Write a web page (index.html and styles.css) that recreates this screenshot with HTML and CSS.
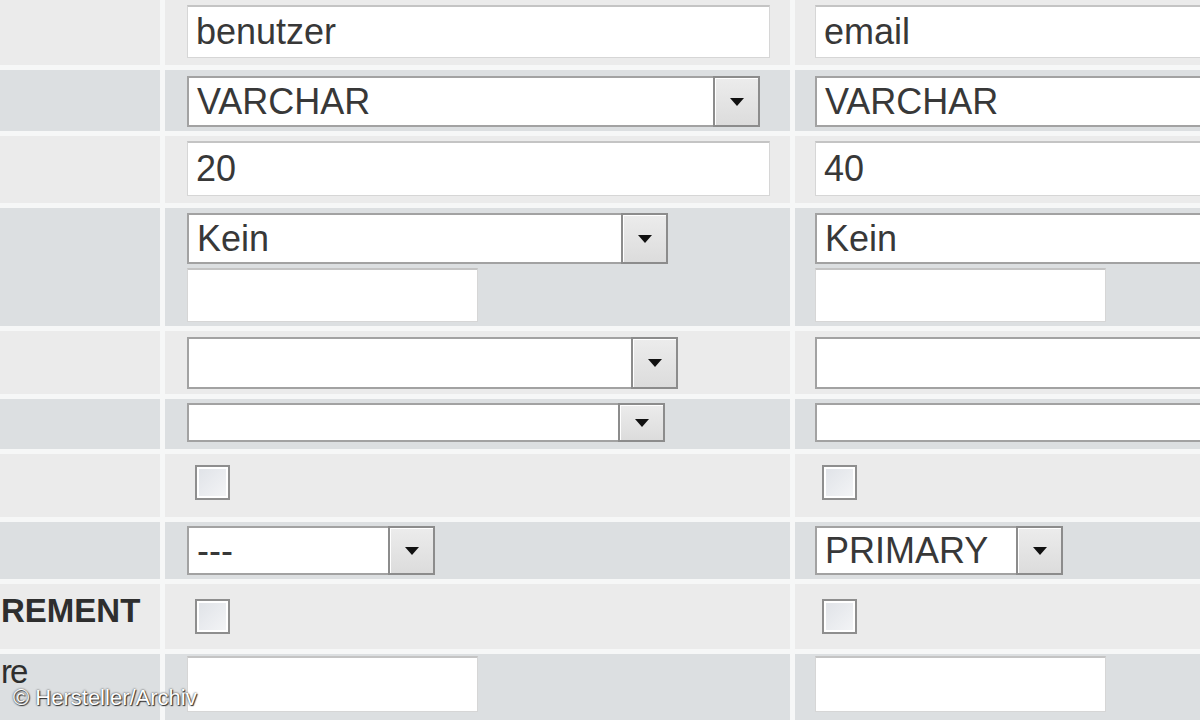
FILE: index.html
```html
<!DOCTYPE html>
<html lang="de">
<head>
  <meta charset="UTF-8">
  <title>Struktur</title>
  <link rel="stylesheet" href="styles.css">
</head>
<body>

  <div class="sheet">

    <div class="row light row-name">
      <div class="label"></div>
      <div class="cell"><input type="text" class="field w-wide h-53" value="benutzer"></div>
      <div class="cell right"><input type="text" class="field w-wide h-53" value="email"></div>
    </div>

    <div class="row dark row-type">
      <div class="label"></div>
      <div class="cell">
        <div class="select w-type h-51"><span class="value">VARCHAR</span><span class="arrow"><svg viewBox="0 0 14 8"><path d="M0 0h14L7 8z"/></svg></span></div>
      </div>
      <div class="cell right">
        <div class="select w-wide h-51"><span class="value">VARCHAR</span><span class="arrow"><svg viewBox="0 0 14 8"><path d="M0 0h14L7 8z"/></svg></span></div>
      </div>
    </div>

    <div class="row light row-length">
      <div class="label"></div>
      <div class="cell"><input type="text" class="field w-wide h-55" value="20"></div>
      <div class="cell right"><input type="text" class="field w-wide h-55" value="40"></div>
    </div>

    <div class="row dark row-default">
      <div class="label"></div>
      <div class="cell stack">
        <div class="select w-default h-51"><span class="value">Kein</span><span class="arrow"><svg viewBox="0 0 14 8"><path d="M0 0h14L7 8z"/></svg></span></div>
        <input type="text" class="field w-small h-54" value="">
      </div>
      <div class="cell right stack">
        <div class="select w-wide h-51"><span class="value">Kein</span><span class="arrow"><svg viewBox="0 0 14 8"><path d="M0 0h14L7 8z"/></svg></span></div>
        <input type="text" class="field w-small h-54" value="">
      </div>
    </div>

    <div class="row light row-collation">
      <div class="label"></div>
      <div class="cell">
        <div class="select w-collation h-52"><span class="value"></span><span class="arrow"><svg viewBox="0 0 14 8"><path d="M0 0h14L7 8z"/></svg></span></div>
      </div>
      <div class="cell right">
        <div class="select w-wide h-52"><span class="value"></span><span class="arrow"><svg viewBox="0 0 14 8"><path d="M0 0h14L7 8z"/></svg></span></div>
      </div>
    </div>

    <div class="row dark row-attr">
      <div class="label"></div>
      <div class="cell">
        <div class="select w-attr h-39"><span class="value"></span><span class="arrow"><svg viewBox="0 0 14 8"><path d="M0 0h14L7 8z"/></svg></span></div>
      </div>
      <div class="cell right">
        <div class="select w-wide h-39"><span class="value"></span><span class="arrow"><svg viewBox="0 0 14 8"><path d="M0 0h14L7 8z"/></svg></span></div>
      </div>
    </div>

    <div class="row light row-null">
      <div class="label"></div>
      <div class="cell check-cell"><span class="checkbox"></span></div>
      <div class="cell right check-cell"><span class="checkbox"></span></div>
    </div>

    <div class="row dark row-index">
      <div class="label"></div>
      <div class="cell">
        <div class="select w-index h-49"><span class="value">---</span><span class="arrow"><svg viewBox="0 0 14 8"><path d="M0 0h14L7 8z"/></svg></span></div>
      </div>
      <div class="cell right">
        <div class="select w-index h-49"><span class="value">PRIMARY</span><span class="arrow"><svg viewBox="0 0 14 8"><path d="M0 0h14L7 8z"/></svg></span></div>
      </div>
    </div>

    <div class="row light row-ai">
      <div class="label bold">REMENT</div>
      <div class="cell check-cell"><span class="checkbox"></span></div>
      <div class="cell right check-cell"><span class="checkbox"></span></div>
    </div>

    <div class="row dark row-comment">
      <div class="label top">re</div>
      <div class="cell"><input type="text" class="field w-small h-56" value=""></div>
      <div class="cell right"><input type="text" class="field w-small h-56" value=""></div>
    </div>

  </div>

  <div class="credit">© Hersteller/Archiv</div>

</body>
</html>
```

FILE: styles.css
```css
html, body {
  margin: 0;
  height: 720px;
  overflow: hidden;
}

body {
  font-family: "Liberation Sans", Arial, sans-serif;
  background-color: #f6f7f7;
  color: #383838;
  position: relative;
}

.sheet {
  display: flex;
  flex-direction: column;
  gap: 5px;
}

.row {
  display: grid;
  grid-template-columns: 160px 625px minmax(0, 1fr);
  column-gap: 5px;
}

.row > div {
  overflow: hidden;
}

.light > div {
  background-color: #ebebeb;
}

.dark > div {
  background-color: #dcdfe1;
}

.row-name { height: 65px; }
.row-type { height: 61px; }
.row-length { height: 67px; }
.row-default { height: 118px; }
.row-collation { height: 63px; }
.row-attr { height: 50px; }
.row-null { height: 63px; }
.row-index { height: 57px; }
.row-ai { height: 65px; }
.row-comment { height: 70px; }

/* labels (left column, only their ends are in the crop) */
.label {
  display: flex;
  align-items: center;
  padding-left: 1px;
  font-size: 36px;
  white-space: nowrap;
  color: #2e2e2e;
}

.label.bold {
  font-weight: bold;
  font-size: 33px;
  padding-bottom: 12px;
}

.label.top {
  align-items: flex-start;
  line-height: 36px;
  font-size: 33px;
  letter-spacing: -2px;
}

.cell {
  padding: 5px 0 0 22px;
}

.cell.right {
  padding-left: 20px;
}

.row-type .cell { padding-top: 6px; }
.row-collation .cell { padding-top: 6px; }
.row-attr .cell { padding-top: 4px; }
.row-index .cell { padding-top: 4px; }
.row-comment .cell { padding-top: 2px; }

.stack {
  display: flex;
  flex-direction: column;
  gap: 4px;
}

/* text fields */
.field {
  display: block;
  box-sizing: border-box;
  margin: 0;
  padding: 0 8px;
  font-family: inherit;
  font-size: 36px;
  color: #383838;
  background-color: #fff;
  border: 1px solid #d6d6d6;
  border-top: 2px solid #c4c4c4;
  outline: none;
}

/* drop downs */
.select {
  display: flex;
  box-sizing: border-box;
  background-color: #fff;
  border: 2px solid #a2a2a2;
  border-right: none;
  font-size: 36px;
}

.select .value {
  flex: 1;
  display: flex;
  align-items: center;
  padding-left: 8px;
  white-space: nowrap;
}

.select .arrow {
  width: 47px;
  flex-shrink: 0;
  display: flex;
  align-items: center;
  justify-content: center;
  box-sizing: border-box;
  margin: -2px 0;
  border: 2px solid #8c8c8c;
  box-shadow: inset 1px 1px 0 #fff;
  background: linear-gradient(#ececec, #dcdcdc);
}

.select .arrow svg {
  width: 14px;
  height: 8px;
  fill: #111;
}

.w-wide { width: 583px; }
.w-type { width: 573px; }
.w-default { width: 481px; }
.w-collation { width: 491px; }
.w-attr { width: 478px; }
.w-index { width: 248px; }
.w-small { width: 291px; }

.h-39 { height: 39px; }
.h-49 { height: 49px; }
.h-51 { height: 51px; }
.h-52 { height: 52px; }
.h-53 { height: 53px; }
.h-54 { height: 54px; }
.h-55 { height: 55px; }
.h-56 { height: 56px; }

/* checkboxes */
.check-cell {
  padding-top: 11px;
  padding-left: 30px;
}

.cell.right.check-cell {
  padding-left: 27px;
}

.row-ai .check-cell {
  padding-top: 15px;
}

.checkbox {
  display: block;
  width: 35px;
  height: 35px;
  box-sizing: border-box;
  border: 2px solid #8e8e8e;
  box-shadow: inset 0 0 0 2px #fff;
  background: linear-gradient(135deg, #dfe2e7, #f4f5f7);
}

.credit {
  position: absolute;
  left: 13px;
  bottom: 9px;
  font-size: 22px;
  color: #fff;
  text-shadow: 0 0 2px #222, 1px 1px 1px #333;
}
```
